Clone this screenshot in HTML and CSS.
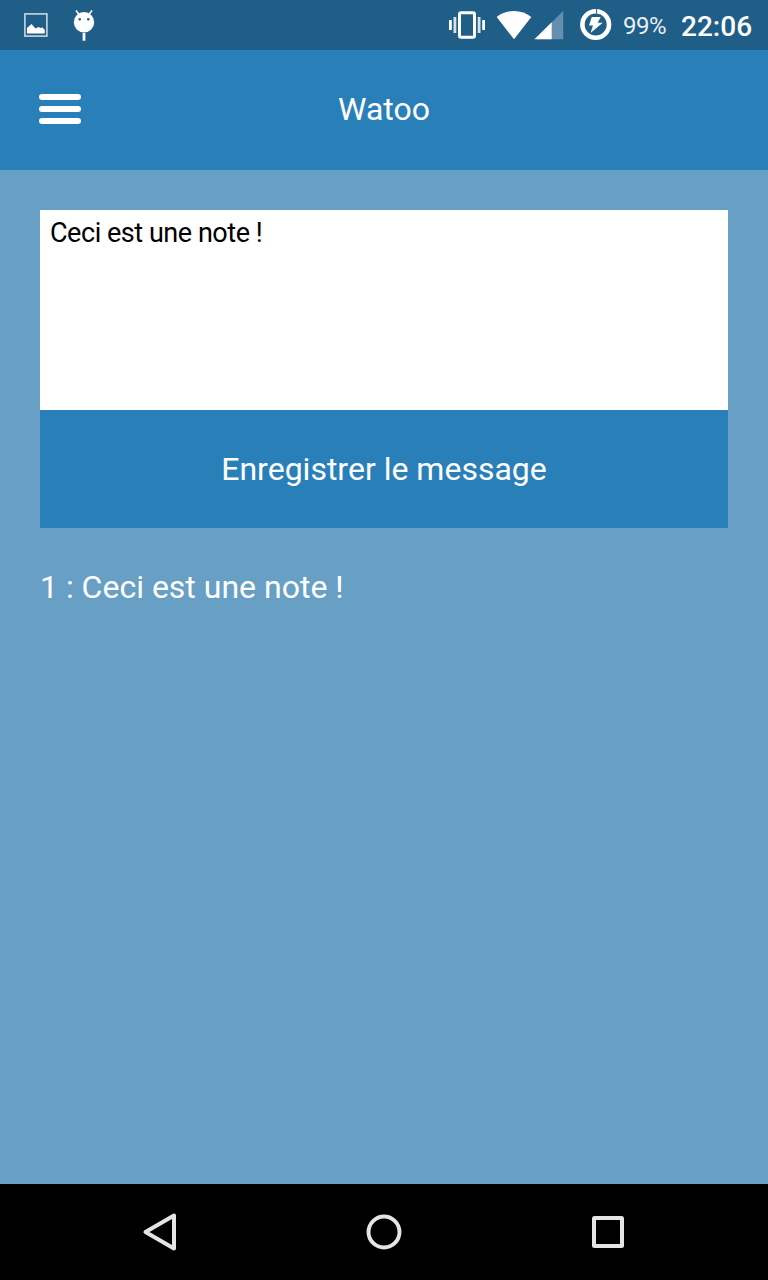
FILE: index.html
```
<!DOCTYPE html>
<html lang="fr">
<head>
<meta charset="utf-8">
<title>Watoo</title>
<link rel="stylesheet" href="styles.css">
</head>
<body>
<div class="screen">
  <div class="status">
    <div class="notifications">
      <svg class="icon" width="24" height="50" viewBox="24 0 24 50">
        <rect x="24.9" y="13.9" width="22" height="22.2" fill="none" stroke="#c9d7e2" stroke-width="1.6"/>
        <path d="M27 33.5V28l4.5-4 4 4.5 3-1.5 2 1 2-.5 2.3 2.5v3.500z" fill="#fff"/>
      </svg>
      <svg class="icon" width="24" height="50" viewBox="72 0 24 50">
        <path d="M76 10.500l3 4M92 10.500l-3 4" stroke="#fff" stroke-width="1.600"/>
        <circle cx="84" cy="22.200" r="10.200" fill="#fff"/>
        <circle cx="79.700" cy="19.300" r="1.300" fill="#1f5e87"/>
        <circle cx="88.300" cy="19.300" r="1.300" fill="#1f5e87"/>
        <path d="M84 33v7.700" stroke="#fff" stroke-width="2.800"/>
      </svg>
    </div>
    <div class="system">
      <svg class="icon" width="148" height="50" viewBox="448 0 148 50">
        <path d="M449 20h2.800v10H449zM482.200 20h2.800v10h-2.800z" fill="#fff"/>
        <path d="M453.500 17h2.800v16h-2.800zM477.700 17h2.800v16h-2.800z" fill="#d5e0e9"/>
        <rect x="459.500" y="12.700" width="15" height="24.600" rx="1.500" fill="none" stroke="#fff" stroke-width="3"/>
        <path d="M514 39.300L496.700 17Q504 11 514 11t17.300 6z" fill="#fff"/>
        <path d="M563.200 11v28.300H534.500z" fill="#658fae"/>
        <path d="M551.700 22.300v17H534.500z" fill="#fff"/>
      </svg>
      <svg class="icon battery" width="32" height="50" viewBox="579.800 0 32 50">
        <circle cx="595.500" cy="24.500" r="13.300" fill="none" stroke="#fff" stroke-width="4.600"/>
        <path d="M596.400 8.500v5" stroke="#1f5e87" stroke-width="1"/>
        <path d="M591.500 17h9l-3 5.700h5L590.300 33l2.500-7.500h-4z" fill="#fff"/>
      </svg>
      <span class="percent">99%</span>
      <span class="clock">22:06</span>
    </div>
  </div>
  <header class="header">
    <div class="menu"><span class="bar"></span><span class="bar"></span><span class="bar"></span></div>
    <h1 class="title">Watoo</h1>
    <div class="spacer"></div>
  </header>
  <main class="content">
    <div class="note">Ceci est une note !</div>
    <div class="save">Enregistrer le message</div>
    <p class="message">1 : Ceci est une note !</p>
  </main>
  <nav class="navbar">
    <svg width="64" height="64" viewBox="128 1200 64 64"><path d="M145.500 1232L174 1215.500V1248.500z" fill="none" stroke="#e5e5e5" stroke-width="4" stroke-linejoin="round"/></svg>
    <svg width="64" height="64" viewBox="352 1200 64 64"><circle cx="384" cy="1232" r="15.500" fill="none" stroke="#e5e5e5" stroke-width="3.900"/></svg>
    <svg width="64" height="64" viewBox="576 1200 64 64"><rect x="592" y="1216" width="32" height="32" rx="2.500" fill="#e5e5e5"/><rect x="596" y="1220" width="24" height="24" fill="#000"/></svg>
  </nav>
</div>
</body>
</html>
```
FILE: styles.css
```
* { box-sizing: border-box; }
body { margin: 0; font-family: Roboto, sans-serif; color: #fff; }
svg { display: block; flex: none; }
.screen { width: 768px; height: 1280px; display: flex; flex-direction: column; background: #689fc5; overflow: hidden; }
.status { height: 50px; display: flex; justify-content: space-between; background: #1f5e87; }
.notifications { display: flex; gap: 24px; padding-left: 24px; }
.system { display: flex; width: 320px; }
.battery { margin-left: -16px; }
.percent { width: 69px; flex: none; padding-left: 11px; font-size: 24px; line-height: 52px; letter-spacing: -.5px; color: #e9eff3; }
.clock { font-size: 28px; line-height: 54px; font-weight: 500; white-space: nowrap; }
.header { height: 120px; padding: 0 39px; display: flex; align-items: center; background: #2980b9; }
.menu, .spacer { width: 42px; flex: none; }
.menu { display: flex; flex-direction: column; gap: 6px; margin-top: -2px; }
.bar { height: 6px; border-radius: 3px; background: #fff; }
.title { flex: 1; margin: -2px 0 0; text-align: center; font-size: 32px; font-weight: 400; line-height: 38px; }
.content { flex: 1; padding: 40px; }
.note { height: 200px; padding: 7px 10px; background: #fff; color: #000; font-size: 27px; line-height: 32px; letter-spacing: -.46px; }
.save { height: 118px; background: #2980b9; text-align: center; font-size: 32px; line-height: 118px; }
.message { margin: 40px 0 0; font-size: 32px; line-height: 38px; }
.navbar { height: 96px; padding: 0 128px; display: flex; align-items: center; justify-content: space-between; background: #000; }
```
